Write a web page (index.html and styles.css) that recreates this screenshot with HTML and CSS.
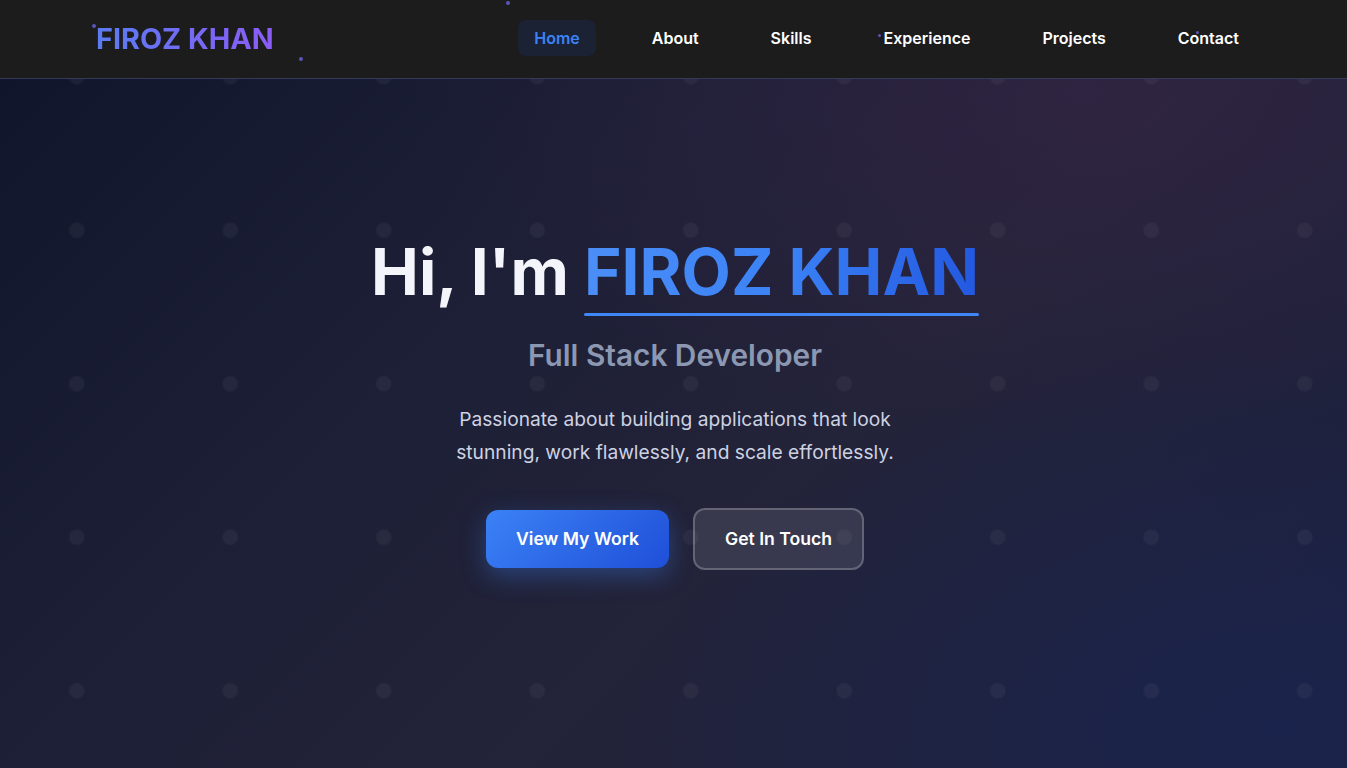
FILE: index.html
```html
<!DOCTYPE html>
<html lang="en">
<head>
<meta charset="utf-8">
<title>Firoz Khan</title>
<link rel="stylesheet" href="styles.css">
</head>
<body>
<header class="site-header">
  <a class="logo" href="#">FIROZ KHAN</a>
  <nav class="nav">
    <a class="nav-link active" href="#">Home</a>
    <a class="nav-link" href="#">About</a>
    <a class="nav-link" href="#">Skills</a>
    <a class="nav-link" href="#">Experience</a>
    <a class="nav-link" href="#">Projects</a>
    <a class="nav-link" href="#">Contact</a>
  </nav>
  <span class="particle p1"></span>
  <span class="particle p2"></span>
  <span class="particle p3"></span>
  <span class="particle p4"></span>
  <span class="particle p5"></span>
</header>
<main class="hero">
  <div class="hero-content">
    <h1 class="hero-title">Hi, I'm <span class="name">FIROZ KHAN</span></h1>
    <h2 class="hero-subtitle">Full Stack Developer</h2>
    <p class="hero-text">Passionate about building applications that look stunning, work flawlessly, and scale effortlessly.</p>
    <div class="hero-actions">
      <a class="btn btn-primary" href="#">View My Work</a>
      <a class="btn btn-secondary" href="#">Get In Touch</a>
    </div>
  </div>
</main>
</body>
</html>
```
FILE: styles.css
```css
* { box-sizing: border-box; }
html, body { margin: 0; padding: 0; }
body {
  font-family: Inter, "Noto Sans", sans-serif;
  color: #fff;
  min-height: 768px;
  overflow: hidden;
  background-color: #1c1e34;
  background-image:
    radial-gradient(circle at 76.75px 76.75px, rgba(255,255,255,0.045) 0, rgba(255,255,255,0.045) 7px, transparent 8.5px),
    radial-gradient(ellipse 50% 45% at 80% 12%, rgba(80,40,85,0.28), transparent 100%),
    radial-gradient(ellipse 50% 50% at 95% 95%, rgba(25,40,95,0.45), transparent 100%),
    linear-gradient(135deg, #10142a 0%, #1c1f36 35%, #232339 60%, #1b1f3c 100%);
  background-size: 153.5px 153.5px, 100% 100%, 100% 100%, 100% 100%;
  background-repeat: repeat, no-repeat, no-repeat, no-repeat;
}
a { text-decoration: none; color: inherit; }

.site-header {
  position: relative;
  height: 79px;
  background: #1c1c1d;
  border-bottom: 1px solid #343a56;
  display: flex;
  align-items: center;
  justify-content: space-between;
  padding: 0 92px 2px 96px;
}
.logo {
  font-size: 28.8px;
  font-weight: 700;
  background: linear-gradient(90deg, #5a7cf2 0%, #8b5cf6 100%);
  -webkit-background-clip: text;
  background-clip: text;
  color: transparent;
}
.nav {
  display: flex;
  align-items: center;
  gap: 40px;
}
.nav-link {
  font-size: 16px;
  font-weight: 600;
  line-height: 20px;
  padding: 8px 16px;
  border-radius: 8px;
  color: #fff;
}
.nav-link.active {
  color: #3b82f6;
  background: #1a2234;
}
.particle {
  position: absolute;
  width: 4px;
  height: 4px;
  border-radius: 50%;
  background: #5b54b5;
}
.p1 { left: 92px; top: 24px; }
.p2 { left: 299px; top: 57px; }
.p3 { left: 506px; top: 1px; }
.p4 { left: 878px; top: 34px; width: 3px; height: 3px; }
.p5 { left: 1196px; top: 31px; width: 3px; height: 3px; }

.hero {
  height: 689px;
  display: flex;
  justify-content: center;
  padding: 154px 0 0 3px;
}
.hero-content {
  display: flex;
  flex-direction: column;
  align-items: center;
  text-align: center;
}
.hero-title {
  margin: 0;
  font-size: 64px;
  font-weight: 700;
  line-height: 77px;
  color: #f4f5fa;
}
.name {
  position: relative;
  display: inline-block;
  background: linear-gradient(90deg, #4b8ef7 0%, #3b82f6 50%, #2358e0 100%);
  -webkit-background-clip: text;
  background-clip: text;
  color: transparent;
}
.name::after {
  content: "";
  position: absolute;
  left: 0;
  right: 0;
  bottom: -6px;
  height: 3px;
  border-radius: 2px;
  background: #3f86f6;
}
.hero-subtitle {
  margin: 27px 0 0;
  font-size: 29.8px;
  font-weight: 600;
  line-height: 36px;
  color: #8c98b2;
}
.hero-text {
  margin: 30px 0 0;
  max-width: 480px;
  font-size: 19.2px;
  line-height: 33px;
  color: #cdd2e2;
}
.hero-actions {
  display: flex;
  align-items: center;
  gap: 24px;
  margin-top: 39px;
}
.btn {
  display: inline-block;
  font-size: 17.6px;
  font-weight: 600;
  line-height: 22px;
  border-radius: 12px;
  color: #fff;
}
.btn-primary {
  padding: 18px 30px;
  background: linear-gradient(135deg, #3b82f6 0%, #1f4fd8 100%);
  box-shadow: 0 8px 24px rgba(59,130,246,0.35);
}
.btn-secondary {
  padding: 18px 30px;
  background: rgba(255,255,255,0.1);
  border: 2px solid rgba(255,255,255,0.22);
}
```
